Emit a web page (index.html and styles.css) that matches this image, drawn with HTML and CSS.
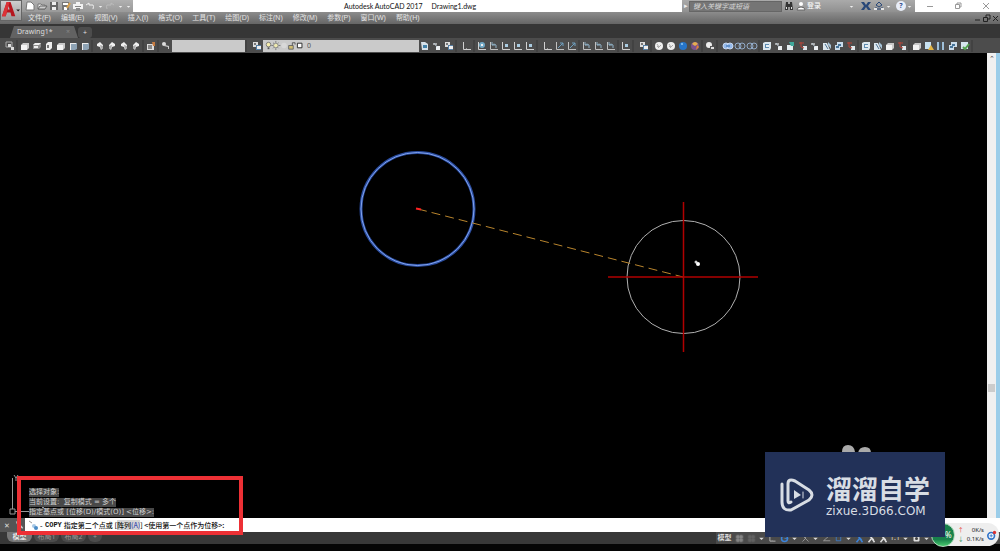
FILE: index.html
```html
<!DOCTYPE html>
<html lang="zh-CN">
<head>
<meta charset="utf-8">
<title>Autodesk AutoCAD 2017 Drawing1.dwg</title>
<link rel="stylesheet" href="styles.css">
</head>
<body>
<svg class="defs" aria-hidden="true">
  <symbol id="cube" viewBox="0 0 12 12"><path d="M2 5l2-2h6v5l-2 2H2z" fill="#c9c9c9"/><path d="M2 5h6v5H2z" fill="#f4f4f4"/></symbol>
  <symbol id="cube-top" viewBox="0 0 12 12"><path d="M2 5l2-2h6v4l-2 2H2z" fill="#8d8d8d"/><path d="M2 5l2-2h6L8 5zM3 6h4v2H3z" fill="#eee"/></symbol>
  <symbol id="cube-side" viewBox="0 0 12 12"><path d="M3 4l2-2h4v6l-2 2H3z" fill="#eee"/><path d="M4 5h2v3H4z" fill="#777"/></symbol>
  <symbol id="cube-blue" viewBox="0 0 12 12"><path d="M3 4l2-1h5v6l-2 1H3z" fill="#8ea3b5"/><path d="M3 3h6v1H4v6H3z" fill="#eee"/></symbol>
  <symbol id="iso" viewBox="0 0 12 12"><path d="M3 4l3-2 3 3v3L7 10 6 7 3 6z" fill="#f0f0f0"/><path d="M6 5l3 1v2L7 9z" fill="#aaa"/></symbol>
  <symbol id="camera" viewBox="0 0 12 12"><path d="M2 4h7v6H2z" fill="#ddd"/><path d="M3 5h4v4H3z" fill="#888"/><path d="M7 2h3v4H8z" fill="#c77b40"/></symbol>
  <symbol id="layer" viewBox="0 0 12 12"><path d="M2 2h5v5H2z" fill="#ddd"/><path d="M5 5h5v5H5z" fill="#567fa5"/><path d="M6 6h4v3H6z" fill="#eee"/><path d="M3 3h2v2H3z" fill="#777"/></symbol>
  <symbol id="key" viewBox="0 0 12 12"><circle cx="4" cy="4" r="2" fill="#ddd"/><path d="M5 5l4 1v3H8V7L4 6" fill="#ccc"/></symbol>
  <symbol id="sheet" viewBox="0 0 12 12"><path d="M2 2h4l3 2v6H3z" fill="#d6e1e9"/><path d="M4 5h4v3H4z" fill="#4381a8"/></symbol>
  <symbol id="axis" viewBox="0 0 12 12"><path d="M2.500 2v7.500H10" fill="none" stroke="#d0d0d0"/><path d="M5 8h1v1H5z" fill="#999"/></symbol>
  <symbol id="axis-dot" viewBox="0 0 12 12"><path d="M2.500 2v7.500H10" fill="none" stroke="#d0d0d0"/><path d="M5 4h3v3H5z" fill="#a9cbe1"/></symbol>
  <symbol id="axis-globe" viewBox="0 0 12 12"><path d="M2.500 2v7.500H10" fill="none" stroke="#d0d0d0"/><circle cx="6" cy="5" r="3" fill="#71a8c5"/><path d="M5 4h2v2H5z" fill="#eee"/></symbol>
  <symbol id="axis-line" viewBox="0 0 12 12"><path d="M2.500 2v7.500H10" fill="none" stroke="#c0c0c0"/><path d="M4 8l5-5M6 3h3v3" fill="none" stroke="#6e9fbf"/></symbol>
  <symbol id="axis-turn" viewBox="0 0 12 12"><path d="M2.500 2v7.500H10" fill="none" stroke="#c0c0c0"/><path d="M8 8V5Q6 3 4 5V2m0 3h3" fill="none" stroke="#8fb0c5"/></symbol>
  <symbol id="ball" viewBox="0 0 12 12"><circle cx="6" cy="6" r="4" fill="#eee"/><path d="M4 4l2 3 2-2M4 6l2 2" fill="none" stroke="#aaa"/></symbol>
  <symbol id="ball-blue" viewBox="0 0 12 12"><circle cx="6" cy="6" r="4" fill="#2675c9"/><circle cx="5" cy="4" r="1" fill="#8dc8f3"/></symbol>
  <symbol id="ball-color" viewBox="0 0 12 12"><circle cx="6" cy="6" r="4" fill="#7b528d"/><path d="M3 4q3-4 6 0L6 6z" fill="#e4ae4e"/><path d="M8 5l2 2-3 3z" fill="#e58230"/></symbol>
  <symbol id="gear" viewBox="0 0 12 12"><circle cx="5" cy="5" r="3" fill="#eee"/><path d="M6 6h4v4H6z" fill="#555"/><path d="M7 7h3v2H7z" fill="#ddd"/></symbol>
  <symbol id="views" viewBox="0 0 12 12"><path d="M2 2h6v5H2z" fill="none" stroke="#aaa"/><path d="M4 4h3v3h3v3H7V7H4z" fill="#ddd"/></symbol>
  <symbol id="union" viewBox="0 0 12 12"><circle cx="4" cy="6" r="3" fill="#95b9ea" stroke="#c8d8f0"/><circle cx="8" cy="6" r="3" fill="#95b9ea" stroke="#c8d8f0"/><path d="M4 5h4v2H4z" fill="#618fc8"/></symbol>
  <symbol id="rings" viewBox="0 0 12 12"><g fill="none" stroke="#91a9c6"><circle cx="4" cy="6" r="3"/><circle cx="8" cy="6" r="3"/></g></symbol>
  <symbol id="box" viewBox="0 0 12 12"><path d="M2 3l2-1h6v6L9 10H2z" fill="#dce7ee"/><path d="M4 4h4v4H4z" fill="#5d8bb0"/><path d="M5 5h3v2H5z" fill="#e8f0f4"/></symbol>
  <symbol id="face" viewBox="0 0 12 12"><path d="M2 3h4v2H2z" fill="#a6a6a6"/><path d="M5 6h4v4H5z" fill="#edf1f4"/><path d="M3 3l3 4" stroke="#b8c7d2"/></symbol>
  <symbol id="face-green" viewBox="0 0 12 12"><path d="M2 5h6v5H2z" fill="#e5eef2"/><path d="M4 2h5v4H6z" fill="#40a99c"/></symbol>
  <symbol id="face-red" viewBox="0 0 12 12"><path d="M6 6h4v4H6z" fill="#dfe6eb"/><path d="M2 3h5M4 2v5l3 1" fill="none" stroke="#b84438"/></symbol>
  <symbol id="slice" viewBox="0 0 12 12"><path d="M2 3h4l3 7H2z" fill="#dce8ef"/><path d="M7 2l3 3v4L7 5z" fill="#a6c3d8"/><path d="M4 4l3 5" stroke="#4e7394"/></symbol>
  <symbol id="copy" viewBox="0 0 12 12"><path d="M4 2h6v5H7v3H2V5h2z" fill="#cadceb"/><path d="M5 4h3v2H5zM3 6h3v2H3z" fill="#477499"/></symbol>
  <symbol id="warn" viewBox="0 0 12 12"><path d="M2 2h6v7H2z" fill="#c7e1f0"/><path d="M8 5l3 5H5z" fill="#e2b341"/></symbol>
  <symbol id="bars" viewBox="0 0 12 12"><path d="M2 2h2v8H2zM7 2h2v8H7z" fill="#9fbfd8"/><path d="M5 2v8" stroke="#355d7c"/></symbol>
  <symbol id="check" viewBox="0 0 12 12"><path d="M2 2h7v7H2z" fill="#d6e5ec"/><path d="M4 7l2 2 4-5" fill="none" stroke="#54a34e" stroke-width="2"/></symbol>
  <symbol id="file" viewBox="0 0 12 12"><path d="M3 2h4l3 3v5H2z" fill="#fff" stroke="#777"/></symbol>
  <symbol id="open" viewBox="0 0 12 12"><path d="M2 9V4h3l1 1h3v4z" fill="#eee" stroke="#777"/><path d="M4 6h7L9 9H2z" fill="#ccc" stroke="#666"/></symbol>
  <symbol id="save" viewBox="0 0 12 12"><path d="M2 2h8v8H2z" fill="#666"/><path d="M4 2h4v3H4zM4 7h4v3H4z" fill="#eee"/></symbol>
  <symbol id="saveas" viewBox="0 0 12 12"><path d="M2 2h7v8H2z" fill="#777"/><path d="M3 3h5v2H3zM4 7h3v3H4z" fill="#fff"/><path d="M10 3L7 8" stroke="#d9a24f" stroke-width="2"/></symbol>
  <symbol id="print" viewBox="0 0 12 12"><path d="M4 2h4v2h3v5H1V4h3z" fill="#f2f2f2"/><path d="M3 6h6v1H3zM4 8h4v3H4z" fill="#888"/></symbol>
  <symbol id="undo" viewBox="0 0 12 12"><path d="M2 5l3-2v2h4q1 1 0 4" fill="none" stroke="#eee"/></symbol>
  <symbol id="redo" viewBox="0 0 12 12"><path d="M10 5L7 3v2H3q-1 1 0 4" fill="none" stroke="#bbb"/></symbol>
  <symbol id="down" viewBox="0 0 12 12"><path d="M3 5h6L6 8z" fill="currentColor"/></symbol>
  <symbol id="grid" viewBox="0 0 12 12"><path d="M1 1h10v10H1z" fill="#666"/><path d="M1 4h10M1 8h10M4 1v10M8 1v10" stroke="#999"/></symbol>
  <symbol id="person" viewBox="0 0 12 12"><path d="M6 1v5l-4 5M6 5l4 6M3 2l6 6" fill="none" stroke="currentColor" stroke-width="2"/></symbol>
</svg>

<div class="app">
<header class="top">
  <button class="logo" aria-label="应用程序菜单"><svg viewBox="0 0 21 21"><path d="M1 16L6 1h4l5 15h-4l-1-4H6l-1 4zM7 9h2L8 5z" fill="#b5161e" fill-rule="evenodd"/><path d="M1 16L6 1h3L5 16z" fill="#dc3236"/><path d="M16 9h4l-2 2z" fill="#222"/></svg></button>
  <div class="title-row">
    <div class="quick">
      <button aria-label="新建"><svg><use href="#file"/></svg></button><button aria-label="打开"><svg><use href="#open"/></svg></button><button aria-label="保存"><svg><use href="#save"/></svg></button><button aria-label="另存为"><svg><use href="#saveas"/></svg></button><button aria-label="打印"><svg><use href="#print"/></svg></button><button aria-label="放弃"><svg><use href="#undo"/></svg></button><button class="tiny" aria-label="放弃列表"><svg><use href="#down"/></svg></button><button aria-label="重做"><svg><use href="#redo"/></svg></button><button class="tiny" aria-label="重做列表"><svg><use href="#down"/></svg></button><button class="tiny" aria-label="自定义"><svg><use href="#down"/></svg></button>
    </div>
    <h1><span>Autodesk AutoCAD 2017</span><span>Drawing1.dwg</span></h1>
    <div class="help">
      <button class="tiny" aria-label="展开">▸</button>
      <input type="text" placeholder="键入关键字或短语" aria-label="搜索">
      <button aria-label="搜索"><svg viewBox="0 0 12 12"><path d="M3 2h2v2h2V2h2l1 8H7V7H5v3H2z" fill="#333"/><path d="M3 7h1v2H3zM8 7h1v2H8z" fill="#ddd"/></svg></button>
      <button class="login"><svg viewBox="0 0 12 12"><circle cx="6" cy="4" r="2" fill="#fff"/><path d="M2 10q0-3 4-3t4 3z" fill="#fff" stroke="#666"/></svg>登录</button>
      <button class="tiny" aria-label="登录菜单"><svg><use href="#down"/></svg></button>
      <button aria-label="Exchange"><svg viewBox="0 0 12 12"><path d="M1 2h3l2 3 2-3h3L8 6l3 4H8L6 7l-2 3H1l3-4z" fill="#284778"/></svg></button>
      <button aria-label="连接"><svg viewBox="0 0 12 12"><path d="M6 2l3 3-3 2-3-2zM3 7v2h6V7" fill="none" stroke="#284778"/><path d="M1 8h3v2H1zM8 8h3v2H8z" fill="#e5e5e5"/></svg></button>
      <button class="tiny" aria-label="连接菜单"><svg><use href="#down"/></svg></button>
      <button class="question" aria-label="帮助">?</button>
      <button class="tiny" aria-label="帮助菜单"><svg><use href="#down"/></svg></button>
    </div>
    <div class="window-buttons"><button aria-label="最小化"><svg viewBox="0 0 12 12"><path d="M3 6.500h6"/></svg></button><button aria-label="还原"><svg viewBox="0 0 12 12"><path d="M3.500 4.500h4v4h-4zM5 4V3h4v4H8"/></svg></button><button aria-label="关闭"><svg viewBox="0 0 12 12"><path d="M3 3l6 6M9 3L3 9"/></svg></button></div>
  </div>
  <nav class="menu">
    <button>文件(F)</button><button>编辑(E)</button><button>视图(V)</button><button>插入(I)</button><button>格式(O)</button><button>工具(T)</button><button>绘图(D)</button><button>标注(N)</button><button>修改(M)</button><button>参数(P)</button><button>窗口(W)</button><button>帮助(H)</button>
    <div class="doc-buttons"><button aria-label="最小化图形"><svg viewBox="0 0 9 9"><path d="M2 6h5"/></svg></button><button aria-label="还原图形"><svg viewBox="0 0 9 9"><path d="M1.500 3.500h4v4h-4zM4 3V1h4v4H6"/></svg></button><button aria-label="关闭图形"><svg viewBox="0 0 9 9"><path d="M2 2l5 5M7 2L2 7"/></svg></button></div>
  </nav>
</header>

<div class="file-tabs"><button class="file-tab">Drawing1*<span>×</span></button><button class="new-tab" aria-label="新图形">+</button></div>

<div class="toolbar">
  <div class="group"><button aria-label="命名视图"><svg><use href="#views"/></svg></button></div>
  <div class="group"><button aria-label="俯视"><svg><use href="#cube"/></svg></button><button aria-label="仰视"><svg><use href="#cube-top"/></svg></button><button aria-label="左视"><svg><use href="#cube-side"/></svg></button><button aria-label="右视"><svg><use href="#cube"/></svg></button><button aria-label="前视"><svg><use href="#cube-blue"/></svg></button><button aria-label="后视"><svg><use href="#cube-blue"/></svg></button></div>
  <div class="group"><button aria-label="西南等轴测"><svg><use href="#iso"/></svg></button><button aria-label="东南等轴测"><svg class="flip"><use href="#iso"/></svg></button><button aria-label="东北等轴测"><svg><use href="#iso"/></svg></button><button aria-label="西北等轴测"><svg class="flip"><use href="#iso"/></svg></button></div>
  <div class="group"><button aria-label="相机"><svg><use href="#camera"/></svg></button></div>
  <div class="group"><button aria-label="视图管理"><svg><use href="#key"/></svg></button><select class="view-select" aria-label="视图"><option></option></select></div>
  <div class="group wide"><button aria-label="图层特性"><svg><use href="#layer"/></svg></button>
    <div class="layer-box"><svg viewBox="0 0 48 12" aria-hidden="true"><circle cx="6" cy="5" r="2.500" fill="#f5ecad" stroke="#777"/><path d="M5 8h2v2H5z" fill="#555"/><circle cx="14" cy="6" r="2.500" fill="#eee9b0" stroke="#888"/><path d="M14 1v2m0 6v2M9 6h2m6 0h2M11 3l1 1m4 4l1 1M17 3l-1 1m-4 4l-1 1" stroke="#777"/><circle cx="23" cy="6" r="3" fill="#d8d8d8"/><path d="M28 6h5v4h-5z" fill="#d0bd72" stroke="#666"/><path d="M32 6V3h3v2" fill="none" stroke="#555"/><path d="M37.500 3.500h5v5h-5z" fill="#fff" stroke="#222"/></svg><select aria-label="图层"><option>0</option></select></div>
    <button aria-label="置为当前"><svg><use href="#sheet"/></svg></button><button aria-label="上一个图层"><svg><use href="#face"/></svg></button><button aria-label="图层状态"><svg><use href="#layer"/></svg></button></div>
  <div class="group wide"><button aria-label="UCS"><svg><use href="#axis"/></svg></button></div>
  <div class="group"><button aria-label="世界"><svg><use href="#axis-globe"/></svg></button><button aria-label="上一个"><svg><use href="#axis-turn"/></svg></button><button aria-label="面"><svg><use href="#axis-dot"/></svg></button><button aria-label="对象"><svg><use href="#axis-dot"/></svg></button><button aria-label="视图UCS"><svg><use href="#axis-dot"/></svg></button></div>
  <div class="group wide"><button aria-label="原点"><svg><use href="#axis"/></svg></button><button aria-label="Z轴矢量"><svg><use href="#axis-line"/></svg></button><button aria-label="三点"><svg><use href="#axis-line"/></svg></button></div>
  <div class="group"><button aria-label="X"><svg><use href="#axis-turn"/></svg></button><button aria-label="Y"><svg><use href="#axis-turn"/></svg></button><button aria-label="Z"><svg><use href="#axis-turn"/></svg></button></div>
  <div class="group"><button aria-label="应用"><svg><use href="#axis-dot"/></svg></button></div>
  <div class="group wide"><button aria-label="二维线框"><svg><use href="#layer"/></svg></button></div>
  <div class="group"><button aria-label="线框"><svg><use href="#ball"/></svg></button><button aria-label="隐藏"><svg><use href="#ball"/></svg></button><button aria-label="真实"><svg><use href="#ball-blue"/></svg></button><button aria-label="概念"><svg><use href="#ball-color"/></svg></button></div>
  <div class="group"><button aria-label="样式管理"><svg><use href="#gear"/></svg></button></div>
  <div class="group wide"><button aria-label="并集"><svg><use href="#union"/></svg></button><button aria-label="差集"><svg><use href="#rings"/></svg></button><button aria-label="交集"><svg><use href="#rings"/></svg></button></div>
  <div class="group"><button aria-label="拉伸面"><svg><use href="#box"/></svg></button><button aria-label="移动面"><svg><use href="#face"/></svg></button><button aria-label="偏移面"><svg><use href="#face-green"/></svg></button><button aria-label="删除面"><svg><use href="#face-red"/></svg></button><button aria-label="旋转面"><svg><use href="#face"/></svg></button><button aria-label="倾斜面"><svg><use href="#slice"/></svg></button><button aria-label="复制面"><svg><use href="#copy"/></svg></button><button aria-label="着色面"><svg><use href="#face-red"/></svg></button></div>
  <div class="group"><button aria-label="复制边"><svg><use href="#box"/></svg></button><button aria-label="着色边"><svg><use href="#slice"/></svg></button><button aria-label="压印"><svg><use href="#cube"/></svg></button><button aria-label="清除"><svg><use href="#face-red"/></svg></button></div>
  <div class="group"><button aria-label="实体"><svg><use href="#cube"/></svg></button><button aria-label="修复"><svg><use href="#warn"/></svg></button><button aria-label="分割"><svg><use href="#bars"/></svg></button><button aria-label="抽壳"><svg><use href="#copy"/></svg></button><button aria-label="检查"><svg><use href="#check"/></svg></button></div>
</div>

<main class="workspace">
  <svg class="drawing" role="img" aria-label="复制圆">
    <circle cx="417.500" cy="156" r="56.500" fill="none" stroke="#294b9d" stroke-width="3"/>
    <circle cx="417.500" cy="156" r="56.500" fill="none" stroke="#82a4ef"/>
    <circle cx="683.500" cy="224" r="56.500" fill="none" stroke="#b0b0b0"/>
    <path d="M418 156L683 224" stroke="#b9852d" stroke-dasharray="9 5"/>
    <path d="M416 155.500l5 1" stroke="#f22" stroke-width="2"/>
    <path d="M608 224h150M683.500 149v150" stroke="#b00000" stroke-width="1.500"/>
    <circle cx="696" cy="209" r="1.500" fill="#ccc"/><circle cx="698" cy="211" r="2" fill="#fff"/>
    <path d="M12.500 425v31M10 456h5v5h-5zM15 458.500h48M14 422l2 3 2-3M16 425v3M40 452l6 6m0-6l-6 6" stroke="#999" fill="none"/>
    <path d="M842 399q0-7 6-7t7 7zM858 400q1-6 7-6t6 6z" fill="#aaa"/>
  </svg>
  <div class="scroll"><button aria-label="向上滚动">⌃</button><div class="thumb"></div></div>
  <div class="history"><p>选择对象:</p><p>当前设置:&nbsp; 复制模式 = 多个</p><p>指定基点或 [位移(D)/模式(O)] &lt;位移&gt;:</p></div>
</main>

<form class="command">
  <button type="button" aria-label="关闭命令行">✕</button>
  <button type="button" aria-label="命令行设置"><svg viewBox="0 0 12 12"><path d="M2 2l3 1 5 6-1 1-6-5z" fill="#ccc"/></svg></button>
  <label for="cmd"><svg viewBox="0 0 12 12"><path d="M1 2l3 2" stroke="#999"/><circle cx="6" cy="7" r="2" fill="#a8c9e7"/><circle cx="8" cy="9" r="2" fill="#4b8cc6"/></svg><span class="dash">-</span><b>COPY</b>指定第二个点或 [<button type="button" class="option">阵列<i>(A)</i></button>] &lt;使用第一个点作为位移&gt;:</label>
  <input id="cmd" type="text">
</form>

<footer class="status">
  <div class="layouts"><button class="current">模型</button><button>布局1</button><button>布局2</button><button>+</button></div>
  <div class="tray">
    <button class="model">模型</button><button aria-label="栅格"><svg><use href="#grid"/></svg></button><button class="dim" aria-label="捕捉"><svg><use href="#grid"/></svg></button><button class="arrow" aria-label="捕捉菜单"><svg><use href="#down"/></svg></button>
    <button aria-label="正交"><svg><use href="#axis"/></svg></button><button aria-label="极轴"><svg viewBox="0 0 12 12"><circle cx="6" cy="6" r="4" fill="none" stroke="#3a83db" stroke-width="2"/><path d="M6 6h5" stroke="#3a83db"/></svg></button><button class="arrow" aria-label="极轴菜单"><svg><use href="#down"/></svg></button><button aria-label="等轴测"><svg viewBox="0 0 12 12"><path d="M2 2l8 8M6 6V2m0 4l-4 4" stroke="#aaa"/></svg></button><button class="arrow" aria-label="等轴测菜单"><svg><use href="#down"/></svg></button><button aria-label="追踪"><svg viewBox="0 0 12 12"><path d="M10 2L2 9h9" fill="none" stroke="#aaa"/></svg></button><button aria-label="对象捕捉"><svg viewBox="0 0 12 12"><path d="M3 3h6v6H3z" fill="none" stroke="#3a83db"/></svg></button><button class="arrow" aria-label="对象捕捉菜单"><svg><use href="#down"/></svg></button>
    <button class="blue" aria-label="注释可见性"><svg><use href="#person"/></svg></button><button aria-label="自动缩放"><svg><use href="#person"/></svg></button><button aria-label="注释比例"><svg><use href="#person"/></svg></button><button class="scale">1:1</button><button class="arrow" aria-label="比例菜单"><svg><use href="#down"/></svg></button><button aria-label="设置"><svg viewBox="0 0 12 12"><path d="M3 2h6l1 1v6l-1 1H3L2 9V3z" fill="#ddd"/><circle cx="6" cy="6" r="2" fill="#444"/></svg></button><button class="arrow" aria-label="设置菜单"><svg><use href="#down"/></svg></button>
  </div>
</footer>
<div class="taskbar"></div>

<div class="frame"></div>
<div class="monitor"><div class="percent">%</div><div class="arrows"><span class="up">↑</span><span class="dn">↓</span></div><div class="rates"><span>0K/s</span><span>0.1K/s</span></div><svg viewBox="0 0 12 12"><circle cx="5" cy="7" r="4" fill="#fff" stroke="#3174c9" stroke-width="2"/><path d="M3 7h4M5 5v4" stroke="#3174c9"/><circle cx="9" cy="3" r="2" fill="#d33"/></svg></div>
<div class="watermark">
  <svg viewBox="0 0 36 36" fill="none" stroke="#d8dde4" stroke-width="3" stroke-linecap="round" stroke-linejoin="round"><path d="M3 7v18q0 9 9 8L30 23q6-5 0-10L16 4q-7-3-7 3v17q0 3 3 1"/><path d="M15 13l7 5-7 4z" fill="#d8dde4" stroke="none"/><path d="M24 15v6" stroke-width="1"/></svg>
  <div class="brand"><strong>溜溜自学</strong><span>zixue.3D66.COM</span></div>
</div>
</div>
</body>
</html>
```
FILE: styles.css
```css
* { box-sizing: border-box; }
body { margin: 0; background: #000; font-family: "Noto Sans", "Noto Sans CJK SC", sans-serif; font-size: 7px; line-height: 10px; }
button, input, select { margin: 0; padding: 0; border: 0; border-radius: 0; background: none; font: inherit; color: inherit; }
button { display: flex; align-items: center; justify-content: center; flex: none; white-space: nowrap; }
button svg { width: 12px; height: 12px; display: block; }
p, h1 { margin: 0; }
.defs { position: absolute; width: 0; height: 0; }
.app { position: relative; display: flex; flex-direction: column; height: 100vh; overflow: hidden; }

.top { display: grid; grid-template-columns: 22px 1fr; grid-template-rows: 12px 12px; background: linear-gradient(#a2a2a2 50%, #8c8c8c 54%, #666); }
.logo { grid-row: 1 / 3; width: 22px; height: 21px; background: linear-gradient(#cfcfcf, #999); border: 1px solid #666; }
.logo svg { width: 20px; height: 20px; }
.title-row { display: flex; background: #fff; color: #333; }
.quick { display: flex; align-items: center; width: 111px; padding-left: 2px; background: linear-gradient(#b0b0b0, #999); color: #eee; }
.quick button { width: 12px; }
.quick .tiny { width: 8px; }
.tiny { width: 8px; }
.tiny svg { width: 7px; height: 7px; }
h1 { flex: 1; display: flex; gap: 9px; padding-left: 211px; font-family: Lato, sans-serif; font-size: 7px; line-height: 12px; font-weight: 400; color: #111; white-space: nowrap; }
.help { display: flex; align-items: center; width: 233px; background: linear-gradient(#aaa, #909090); color: #eee; }
.help input { width: 93px; height: 11px; padding-left: 3px; background: #757575; border: 1px solid #666; font-style: italic; }
.help input::placeholder { color: #d8d8d8; }
.help > button { width: 13px; }
.help > .tiny { width: 7px; }
.help > .login { width: 53px; justify-content: flex-start; color: #fff; }
.help > .tiny + button { margin-left: 4px; }
.help > .question { width: 10px; height: 10px; border-radius: 50%; background: #e8edf8; color: #2d4b8b; font-weight: 700; }
.window-buttons { display: flex; width: 85px; justify-content: space-around; padding-left: 1px; }
.window-buttons path { fill: none; stroke: #999; }
.menu { display: flex; gap: 10px; align-items: center; padding-left: 6px; background: linear-gradient(#8c8c8c, #666); color: #e4e4e4; font-family: "Liberation Sans", "Noto Sans CJK SC", sans-serif; }
.doc-buttons { display: flex; margin-left: auto; }
.doc-buttons svg { width: 9px; height: 9px; }
.doc-buttons path { fill: none; stroke: #222; }

.file-tabs { display: flex; align-items: flex-end; flex: none; height: 14px; padding-left: 10px; background: #363636; color: #ddd; }
.file-tab { height: 12px; width: 68px; padding-left: 7px; justify-content: space-between; padding-right: 8px; background: #626262; clip-path: polygon(0 100%, 4px 0, 64px 0, 100% 100%); }
.file-tab span { color: #888; }
.new-tab { width: 14px; height: 11px; background: #4c4c4c; border-radius: 3px; }
.toolbar { display: flex; align-items: center; gap: 3px; flex: none; height: 15px; padding-left: 4px; background: #4c4c4c; overflow: hidden; }
.group { display: flex; align-items: center; flex: none; box-shadow: 2px 0 #424242; }
.group.wide { margin-left: 3px; }
.flip { transform: scaleX(-1); }
select { appearance: none; color: #555; }
.view-select { width: 73px; height: 12px; background: #cacaca; }
.layer-box { display: flex; width: 156px; height: 12px; background: #cacaca; }
.layer-box svg { width: 44px; height: 11px; flex: none; }
.layer-box select { flex: 1; }

.workspace { position: relative; display: flex; flex: 1; min-height: 0; background: #000; }
.drawing { flex: 1; min-width: 0; height: 100%; }
.scroll { width: 13px; display: flex; flex-direction: column; background: #f0f0f0; border-right: 4px solid #9bcde9; color: #444; }
.scroll button { height: 12px; }
.thumb { height: 8px; margin: auto 1px 126px; background: #ccc; }
.history { position: absolute; left: 29px; bottom: 1px; display: grid; gap: 1px; justify-items: start; color: #d0d0d0; font-family: "DejaVu Sans", "Noto Sans CJK SC", sans-serif; }
.history p { background: #484848; line-height: 9px; }

.command { display: flex; align-items: center; flex: none; height: 14px; background: #fff; color: #111; font-family: "Noto Sans CJK SC", sans-serif; }
.command > button { width: 14px; height: 14px; background: #555; color: #ddd; }
.command > button + button { width: 11px; }
.command label { display: flex; align-items: center; padding-left: 3px; white-space: pre; font-weight: 500; }
.command label svg { width: 12px; height: 12px; }
.command b { margin: 0 2px 0 1px; font-family: "Liberation Mono", monospace; }
.dash { width: 4px; }
.option { background: #d5d5d5; }
.option i { font-style: normal; color: #4450b0; }
.command input { flex: 1; min-width: 0; outline: 0; }

.status { display: flex; flex: none; height: 12px; background: #383838; color: #ddd; }
.layouts { display: flex; flex: 1; padding-left: 7px; gap: 2px; color: #999; }
.layouts button { width: 25px; height: 10px; background: #4c4c4c; border-radius: 0 0 6px 6px; }
.layouts .current { background: #777; color: #fff; }
.layouts button:last-child { width: 14px; }
.tray { display: flex; align-items: center; width: 284px; background: #4a4a4a; }
.tray button { width: 12px; }
.tray .arrow { width: 9px; }
.tray svg { width: 9px; height: 9px; }
.tray .model { width: 17px; font-weight: 700; }
.dim { opacity: .4; }
.tray .blue { color: #3a83db; }
.taskbar { flex: none; height: 7px; background: #050505; }

.frame { position: absolute; left: 17px; bottom: 16px; width: 226px; height: 59px; border: 4px solid #ed3035; }
.monitor { position: absolute; right: 1px; bottom: 5px; display: flex; align-items: center; justify-content: flex-end; gap: 3px; width: 64px; height: 23px; padding-right: 2px; border-radius: 12px; background: #eee; color: #222; font-size: 6px; line-height: 9px; }
.percent { width: 24px; height: 24px; margin-right: auto; border-radius: 50%; border: 1px solid #b5dcc0; background: linear-gradient(#18814b 70%, #48c96d); color: #fff; font-size: 8px; line-height: 22px; padding-right: 2px; text-align: right; flex: none; }
.arrows, .rates { display: flex; flex-direction: column; text-align: right; }
.up { color: #e54335; }
.dn { color: #329864; }
.monitor svg { width: 10px; height: 12px; flex: none; }
.watermark { position: absolute; right: 55px; bottom: 14px; display: flex; align-items: center; gap: 11px; width: 180px; height: 85px; padding-left: 14px; background: #223158; color: #d8dde4; }
.watermark svg { width: 36px; height: 36px; }
.brand { display: flex; flex-direction: column; }
.brand strong { font-family: "Noto Sans CJK SC", sans-serif; font-size: 26px; line-height: 32px; font-weight: 700; }
.brand span { font-family: "DejaVu Sans", sans-serif; font-size: 12px; line-height: 14px; }
```
